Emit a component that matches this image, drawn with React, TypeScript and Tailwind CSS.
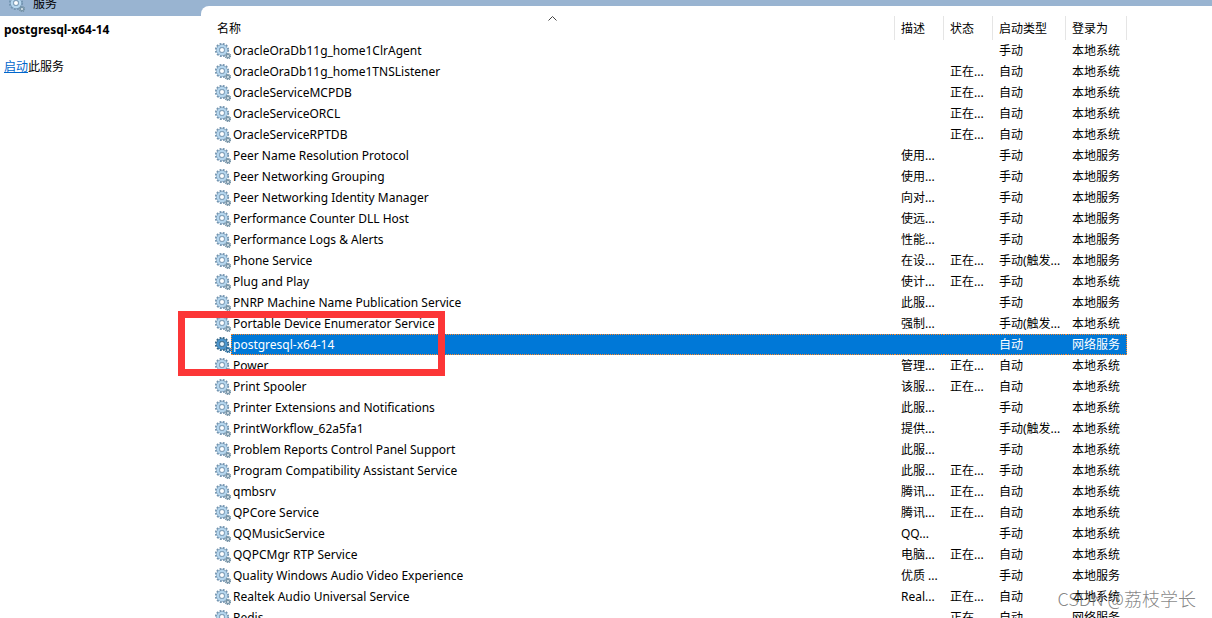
type Service = {
  name: string;
  desc?: string;
  running?: boolean;
  start: string;
  logon: string;
  selected?: boolean;
};

const SYS = "本地系统";
const LOCAL = "本地服务";
const NET = "网络服务";
const MANUAL = "手动";
const AUTO = "自动";
const TRIGGER = "手动(触发...";

const services: Service[] = [
  { name: "OracleOraDb11g_home1ClrAgent", start: MANUAL, logon: SYS },
  { name: "OracleOraDb11g_home1TNSListener", running: true, start: AUTO, logon: SYS },
  { name: "OracleServiceMCPDB", running: true, start: AUTO, logon: SYS },
  { name: "OracleServiceORCL", running: true, start: AUTO, logon: SYS },
  { name: "OracleServiceRPTDB", running: true, start: AUTO, logon: SYS },
  { name: "Peer Name Resolution Protocol", desc: "使用...", start: MANUAL, logon: LOCAL },
  { name: "Peer Networking Grouping", desc: "使用...", start: MANUAL, logon: LOCAL },
  { name: "Peer Networking Identity Manager", desc: "向对...", start: MANUAL, logon: LOCAL },
  { name: "Performance Counter DLL Host", desc: "使远...", start: MANUAL, logon: LOCAL },
  { name: "Performance Logs & Alerts", desc: "性能...", start: MANUAL, logon: LOCAL },
  { name: "Phone Service", desc: "在设...", running: true, start: TRIGGER, logon: LOCAL },
  { name: "Plug and Play", desc: "使计...", running: true, start: MANUAL, logon: SYS },
  { name: "PNRP Machine Name Publication Service", desc: "此服...", start: MANUAL, logon: LOCAL },
  { name: "Portable Device Enumerator Service", desc: "强制...", start: TRIGGER, logon: SYS },
  { name: "postgresql-x64-14", start: AUTO, logon: NET, selected: true },
  { name: "Power", desc: "管理...", running: true, start: AUTO, logon: SYS },
  { name: "Print Spooler", desc: "该服...", running: true, start: AUTO, logon: SYS },
  { name: "Printer Extensions and Notifications", desc: "此服...", start: MANUAL, logon: SYS },
  { name: "PrintWorkflow_62a5fa1", desc: "提供...", start: TRIGGER, logon: SYS },
  { name: "Problem Reports Control Panel Support", desc: "此服...", start: MANUAL, logon: SYS },
  { name: "Program Compatibility Assistant Service", desc: "此服...", running: true, start: MANUAL, logon: SYS },
  { name: "qmbsrv", desc: "腾讯...", running: true, start: AUTO, logon: SYS },
  { name: "QPCore Service", desc: "腾讯...", running: true, start: AUTO, logon: SYS },
  { name: "QQMusicService", desc: "QQ...", start: MANUAL, logon: SYS },
  { name: "QQPCMgr RTP Service", desc: "电脑...", running: true, start: AUTO, logon: SYS },
  { name: "Quality Windows Audio Video Experience", desc: "优质 ...", start: MANUAL, logon: LOCAL },
  { name: "Realtek Audio Universal Service", desc: "Real...", running: true, start: AUTO, logon: SYS },
  { name: "Redis", running: true, start: AUTO, logon: NET },
];

function Gears({ selected = false }: { selected?: boolean }) {
  const teeth = selected ? "#2f6488" : "#7294b0";
  const body = selected ? "#4d97cf" : "#b5d6ee";
  const small = selected ? "#2d6f9f" : "#7895a8";
  return (
    <svg viewBox="0 0 16 16" className="size-4 shrink-0" aria-hidden="true">
      <circle cx="7" cy="7" r="6.2" fill="none" stroke={teeth} strokeWidth="1.8" strokeDasharray="1.9 1.346" />
      <circle cx="7" cy="7" r="4.1" fill="none" stroke={teeth} strokeWidth="3.2" />
      <circle cx="7" cy="7" r="4.1" fill="none" stroke={body} strokeWidth="2.4" />
      <circle cx="7" cy="7" r="2.5" fill={selected ? "#e8f3fb" : "#fff"} stroke={teeth} strokeWidth="0.9" />
      <circle cx="13" cy="13" r="2.6" fill="none" stroke={small} strokeWidth="1.4" strokeDasharray="1.2 0.84" />
      <circle cx="13" cy="13" r="1.6" fill="#e6f0f6" stroke={small} strokeWidth="1.3" />
    </svg>
  );
}

const headCell = "relative border-r border-[#e5e5e5] pb-0.5 pl-1.5 pt-1 text-left font-normal";

function Row({ s }: { s: Service }) {
  const cell = s.selected
    ? "border-y border-dotted border-[#ff8728] bg-[#0078d7] pl-1.5 text-white"
    : "pl-1.5";
  return (
    <tr className="h-[21px]" aria-selected={s.selected ?? false}>
      <td className="relative p-0">
        <div className="flex h-[21px] items-center pl-1">
          <Gears selected={s.selected} />
          <span
            className={
              s.selected
                ? "flex h-full flex-1 items-center border-y border-l border-dotted border-[#ff8728] bg-[#0078d7] pl-px text-white"
                : "pl-0.5"
            }
          >
            {s.name}
          </span>
        </div>
        {s.selected && (
          <div className="pointer-events-none absolute -left-[33px] -top-[23px] z-10 h-[65px] w-[267px] border-7 border-[#fc3637]" />
        )}
      </td>
      <td className={cell}>{s.desc}</td>
      <td className={cell}>{s.running ? "正在..." : ""}</td>
      <td className={cell}>{s.start}</td>
      <td className={s.selected ? cell + " border-r" : cell}>{s.logon}</td>
    </tr>
  );
}

export default function App() {
  return (
    <div className="relative flex h-screen overflow-hidden bg-[#99b4d1] font-['Noto_Sans','Noto_Sans_CJK_SC',sans-serif] text-[12px] leading-4 text-black">
      <aside className="flex w-[201px] shrink-0 flex-col">
        <header className="flex h-4 shrink-0 items-end gap-2 overflow-hidden pb-1 pl-[9px]">
          <Gears />
          <h1 className="leading-4">服务</h1>
        </header>
        <div className="flex-1 bg-white px-1 pt-1.5">
          <h2 className="font-bold">postgresql-x64-14</h2>
          <p className="pt-[21px]">
            <a href="#start" className="text-[#0066cc] underline">
              启动
            </a>
            此服务
          </p>
        </div>
      </aside>
      <main className="mt-1.5 min-w-0 flex-1 rounded-tl-lg bg-white pl-2.5 pr-[85px] pt-2.5">
        <table className="w-full table-fixed border-separate border-spacing-0 whitespace-nowrap">
          <colgroup>
            <col />
            <col className="w-[49px]" />
            <col className="w-[49px]" />
            <col className="w-[73px]" />
            <col className="w-[61px]" />
          </colgroup>
          <thead>
            <tr className="h-6">
              <th className={headCell} aria-sort="ascending">
                名称
                <svg viewBox="0 0 9 5" className="absolute inset-x-0 top-0 mx-auto h-[5px] w-[9px]" aria-hidden="true">
                  <path d="M0.5 4.5 4.5 0.5 8.5 4.5" fill="none" stroke="#444" />
                </svg>
              </th>
              <th className={headCell}>描述</th>
              <th className={headCell}>状态</th>
              <th className={headCell}>启动类型</th>
              <th className={headCell}>登录为</th>
            </tr>
          </thead>
          <tbody>
            {services.map((s) => (
              <Row key={s.name} s={s} />
            ))}
          </tbody>
        </table>
      </main>
      <div className="pointer-events-none absolute bottom-2 right-4 font-['Noto_Sans_CJK_SC',sans-serif] text-[18px] font-light leading-6 text-[#666]/80">
        CSDN @荔枝学长
      </div>
    </div>
  );
}
